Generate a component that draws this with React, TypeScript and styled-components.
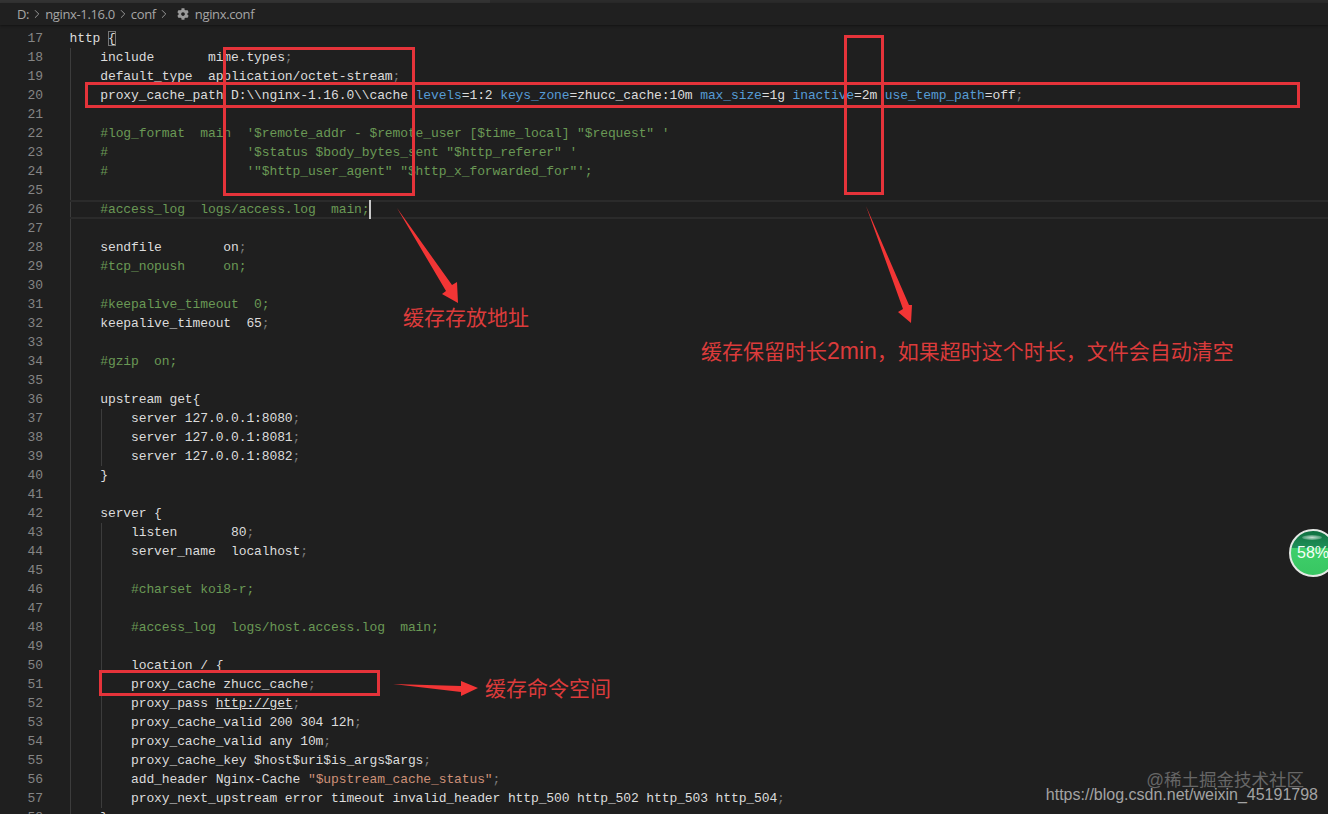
import React from 'react';
import styled, { createGlobalStyle } from 'styled-components';
import { ChevronRight } from 'lucide-react';
import { FaCog } from 'react-icons/fa';

type Kind = 'plain' | 'comment' | 'key' | 'dim' | 'string' | 'link' | 'brace';
type Token = [string, Kind?];

const c = (s: string): Token[] => [[s, 'comment']];
const stmt = (s: string): Token[] => [[s], [';', 'dim']];

const LINES: Token[][] = [
  [['http '], ['{', 'brace']],
  stmt('    include       mime.types'),
  stmt('    default_type  application/octet-stream'),
  [
    ['    proxy_cache_path D:\\\\nginx-1.16.0\\\\cache '],
    ['levels', 'key'],
    ['=1:2 '],
    ['keys_zone', 'key'],
    ['=zhucc_cache:10m '],
    ['max_size', 'key'],
    ['=1g '],
    ['inactive', 'key'],
    ['=2m '],
    ['use_temp_path', 'key'],
    ['=off'],
    [';', 'dim'],
  ],
  [],
  c(`    #log_format  main  '$remote_addr - $remote_user [$time_local] "$request" '`),
  c(`    #                  '$status $body_bytes_sent "$http_referer" '`),
  c(`    #                  '"$http_user_agent" "$http_x_forwarded_for"';`),
  [],
  c('    #access_log  logs/access.log  main;'),
  [],
  stmt('    sendfile        on'),
  c('    #tcp_nopush     on;'),
  [],
  c('    #keepalive_timeout  0;'),
  stmt('    keepalive_timeout  65'),
  [],
  c('    #gzip  on;'),
  [],
  [['    upstream get{']],
  stmt('        server 127.0.0.1:8080'),
  stmt('        server 127.0.0.1:8081'),
  stmt('        server 127.0.0.1:8082'),
  [['    }']],
  [],
  [['    server {']],
  stmt('        listen       80'),
  stmt('        server_name  localhost'),
  [],
  c('        #charset koi8-r;'),
  [],
  c('        #access_log  logs/host.access.log  main;'),
  [],
  [['        location / {']],
  stmt('        proxy_cache zhucc_cache'),
  [['        proxy_pass '], ['http://get', 'link'], [';', 'dim']],
  stmt('        proxy_cache_valid 200 304 12h'),
  stmt('        proxy_cache_valid any 10m'),
  stmt('        proxy_cache_key $host$uri$is_args$args'),
  [
    ['        add_header Nginx-Cache '],
    ['"', 'string'],
    ['$upstream_cache_status', 'string'],
    ['"', 'string'],
    [';', 'dim'],
  ],
  stmt('        proxy_next_upstream error timeout invalid_header http_500 http_502 http_503 http_504'),
  [['    }']],
];

const FIRST_LINE = 17;
const CURSOR_LINE = 26;

const guideDepth = (n: number) => {
  if ((n >= 37 && n <= 39) || (n >= 43 && n <= 57)) return 2;
  if (n >= 18 && n <= 58) return 1;
  return 0;
};

const BOXES = [
  { x: 223, y: 47, w: 192, h: 149 },
  { x: 85, y: 82, w: 1215, h: 26 },
  { x: 844, y: 35, w: 40, h: 160 },
  { x: 99, y: 670, w: 281, h: 26 },
];

const ARROWS = [
  '397,208 452,285 457,282 458,303 442,294 446,291',
  '866,206 909,305 912,305 911,323 898,312 903,309',
  '393,684 461,686 461,681 478,688 461,696 461,692',
];

const App: React.FC = () => {
  return (
    <Window>
      <GlobalStyle />
      <TopStrip />
      <Breadcrumbs>
        <Crumb>D:</Crumb>
        <Chevron size={14} strokeWidth={1.5} />
        <Crumb>nginx-1.16.0</Crumb>
        <Chevron size={14} strokeWidth={1.5} />
        <Crumb>conf</Crumb>
        <Chevron size={14} strokeWidth={1.5} />
        <Gear size={12} />
        <Crumb>nginx.conf</Crumb>
      </Breadcrumbs>
      <Editor>
        {LINES.map((tokens, i) => {
          const n = FIRST_LINE + i;
          return (
            <Row key={n}>
              <LineNumber>{n}</LineNumber>
              <Code $depth={guideDepth(n)} $active={n === CURSOR_LINE}>
                {tokens.map(([text, kind], j) => (
                  <Tok key={j} $kind={kind ?? 'plain'}>
                    {text}
                  </Tok>
                ))}
                {n === CURSOR_LINE && <Cursor />}
              </Code>
            </Row>
          );
        })}
      </Editor>

      {BOXES.map((b) => (
        <RedBox key={`${b.x}-${b.y}`} $x={b.x} $y={b.y} $w={b.w} $h={b.h} />
      ))}
      <ArrowLayer viewBox="0 0 1328 814">
        {ARROWS.map((points) => (
          <polygon key={points} points={points} fill="#f23535" />
        ))}
      </ArrowLayer>
      <Note $x={403} $y={304}>缓存存放地址</Note>
      <Note $x={701} $y={337}>
        缓存保留时长<NoteLatin>2min</NoteLatin>，如果超时这个时长，文件会自动清空
      </Note>
      <Note $x={485} $y={675}>缓存命令空间</Note>

      <Gauge>
        <GaugeShine />
        <GaugeText>58%</GaugeText>
      </Gauge>
      <WatermarkJuejin>@稀土掘金技术社区</WatermarkJuejin>
      <WatermarkCsdn>https://blog.csdn.net/weixin_45191798</WatermarkCsdn>
    </Window>
  );
};

export default App;

const GlobalStyle = createGlobalStyle`
  html, body {
    margin: 0;
    padding: 0;
    background: #1f1f1f;
  }
`;

const Window = styled.div`
  position: relative;
  display: flex;
  flex-direction: column;
  width: 1328px;
  height: 814px;
  overflow: hidden;
  background: #1f1f1f;
`;

const TopStrip = styled.div`
  flex: none;
  height: 3px;
  background: linear-gradient(90deg, #333 0 490px, #2b2b2b 490px);
`;

const Breadcrumbs = styled.div`
  flex: none;
  display: flex;
  align-items: center;
  height: 22px;
  padding-left: 17px;
  background: #202020;
  box-shadow: 0 1px 2px #141414;
  color: #a6a6a6;
  font: 13px/22px 'Open Sans', 'Noto Sans', sans-serif;
`;

const Crumb = styled.span`
  letter-spacing: -0.35px;
`;

const Chevron = styled(ChevronRight)`
  flex: none;
  margin: 0 1px;
`;

const Gear = styled(FaCog)`
  flex: none;
  margin: 0 6px 0 5px;
  color: #9a9a9a;
`;

const Editor = styled.div`
  flex: 1;
  padding-top: 4px;
  font-family: 'Liberation Mono', 'DejaVu Sans Mono', monospace;
  font-size: 13px;
  letter-spacing: -0.11px;
  line-height: 19px;
`;

const Row = styled.div`
  display: flex;
  height: 19px;
`;

const LineNumber = styled.span`
  flex: none;
  width: 43px;
  padding-right: 26.5px;
  text-align: right;
  color: #858585;
`;

const guideLines = (depth: number) => {
  const layers = ['linear-gradient(#3c3c3c, #3c3c3c) 0 0 / 1px 100% no-repeat'];
  if (depth > 1) layers.push('linear-gradient(#3c3c3c, #3c3c3c) 31px 0 / 1px 100% no-repeat');
  return depth > 0 ? layers.join(', ') : 'none';
};

const Code = styled.div<{ $depth: number; $active: boolean }>`
  flex: 1;
  white-space: pre;
  background: ${({ $depth }) => guideLines($depth)};
  ${({ $active }) => $active && 'box-shadow: inset 0 2px #2b2b2b, inset 0 -2px #2b2b2b;'}
`;

const KIND_COLORS: Record<Kind, string> = {
  plain: '#dcdcdc',
  comment: '#6a9955',
  key: '#569cd6',
  dim: '#7a7a7a',
  string: '#ce9178',
  link: '#dcdcdc',
  brace: '#dcdcdc',
};

const Tok = styled.span<{ $kind: Kind }>`
  color: ${({ $kind }) => KIND_COLORS[$kind]};
  ${({ $kind }) => $kind === 'link' && 'text-decoration: underline;'}
  ${({ $kind }) => $kind === 'brace' && 'outline: 1px solid #777; outline-offset: -1px;'}
`;

const Cursor = styled.span`
  display: inline-block;
  width: 2px;
  height: 19px;
  vertical-align: top;
  background: #c8c8c8;
`;

const RedBox = styled.div<{ $x: number; $y: number; $w: number; $h: number }>`
  position: absolute;
  left: ${({ $x }) => $x}px;
  top: ${({ $y }) => $y}px;
  width: ${({ $w }) => $w}px;
  height: ${({ $h }) => $h}px;
  box-sizing: border-box;
  border: 3px solid #e5333a;
`;

const ArrowLayer = styled.svg`
  position: absolute;
  inset: 0;
  width: 1328px;
  height: 814px;
`;

const Note = styled.div<{ $x: number; $y: number }>`
  position: absolute;
  left: ${({ $x }) => $x}px;
  top: ${({ $y }) => $y}px;
  color: #db3b3b;
  font: 21px/28px 'Liberation Sans', 'Noto Sans CJK SC', sans-serif;
  white-space: nowrap;
`;

const NoteLatin = styled.span`
  font-size: 23px;
`;

const Gauge = styled.div`
  position: absolute;
  left: 1289px;
  top: 529px;
  display: flex;
  align-items: center;
  justify-content: center;
  width: 48px;
  height: 48px;
  box-sizing: border-box;
  overflow: hidden;
  border: 2px solid #e4e8e4;
  border-radius: 50%;
  background: linear-gradient(#0f7040 0%, #1f9058 38%, #3fcf6a 39%, #38c662 100%);
`;

const GaugeShine = styled.div`
  position: absolute;
  top: 4px;
  left: 11px;
  width: 20px;
  height: 5px;
  border-radius: 50%;
  background: radial-gradient(rgba(255, 255, 255, 0.75), rgba(255, 255, 255, 0));
`;

const GaugeText = styled.span`
  position: relative;
  color: #f4fff6;
  font: 16px 'Liberation Sans', sans-serif;
`;

const WatermarkJuejin = styled.div`
  position: absolute;
  right: 24px;
  top: 772px;
  color: #666;
  font: 17.5px/16px 'Liberation Sans', 'Noto Sans CJK SC', sans-serif;
  white-space: nowrap;
`;

const WatermarkCsdn = styled.div`
  position: absolute;
  right: 10px;
  top: 788px;
  color: #a3a3a3;
  font: 16px/14px 'Liberation Sans', sans-serif;
  white-space: nowrap;
`;
